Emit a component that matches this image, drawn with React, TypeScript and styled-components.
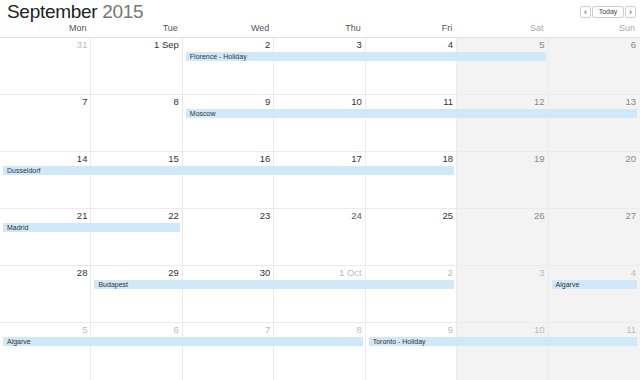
import styled, { createGlobalStyle } from "styled-components";

const GlobalStyle = createGlobalStyle`
  html, body {
    margin: 0;
    padding: 0;
    background: #fff;
    font-family: "Liberation Sans", Arial, sans-serif;
  }
`;

type Day = { label: string; muted?: boolean; today?: boolean };
type Evt = { title: string; start: number; end: number };
type Week = { days: Day[]; events: Evt[] };

const dayNames = ["Mon", "Tue", "Wed", "Thu", "Fri", "Sat", "Sun"];

const d = (label: string | number, muted = false, today = false): Day => ({
  label: String(label),
  muted,
  today,
});

const weeks: Week[] = [
  {
    days: [d(31, true), d("1 Sep"), d(2), d(3), d(4), d(5), d(6)],
    events: [{ title: "Florence - Holiday", start: 3, end: 6 }],
  },
  {
    days: [d(7), d(8), d(9), d(10), d(11), d(12), d(13)],
    events: [{ title: "Moscow", start: 3, end: 7 }],
  },
  {
    days: [d(14), d(15), d(16), d(17), d(18), d(19), d(20)],
    events: [{ title: "Dusseldorf", start: 1, end: 5 }],
  },
  {
    days: [d(21), d(22), d(23), d(24, false, true), d(25), d(26), d(27)],
    events: [{ title: "Madrid", start: 1, end: 2 }],
  },
  {
    days: [d(28), d(29), d(30), d("1 Oct", true), d(2, true), d(3, true), d(4, true)],
    events: [
      { title: "Budapest", start: 2, end: 5 },
      { title: "Algarve", start: 7, end: 7 },
    ],
  },
  {
    days: [d(5, true), d(6, true), d(7, true), d(8, true), d(9, true), d(10, true), d(11, true)],
    events: [
      { title: "Algarve", start: 1, end: 4 },
      { title: "Toronto - Holiday", start: 5, end: 7 },
    ],
  },
];

function App() {
  return (
    <>
      <GlobalStyle />
      <Calendar>
        <TopBar>
          <Title>
            <strong>September</strong> <span>2015</span>
          </Title>
          <Nav>
            <NavButton>‹</NavButton>
            <NavButton $wide>Today</NavButton>
            <NavButton>›</NavButton>
          </Nav>
        </TopBar>
        <DayNames>
          {dayNames.map((n, i) => (
            <DayName key={n} $weekend={i >= 5}>
              {n}
            </DayName>
          ))}
        </DayNames>
        <Weeks>
          {weeks.map((w, wi) => (
            <WeekRow key={wi}>
              {w.days.map((day, i) => (
                <Cell key={i} $col={i + 1} $weekend={i >= 5} $last={i === 6} />
              ))}
              {w.days.map((day, i) => (
                <DayNumber
                  key={"n" + i}
                  $col={i + 1}
                  $muted={day.muted}
                  $weekend={i >= 5}
                  $today={day.today}
                >
                  {day.label}
                </DayNumber>
              ))}
              {w.events.map((e) => (
                <EventBar key={e.title} $start={e.start} $end={e.end}>
                  {e.title}
                </EventBar>
              ))}
            </WeekRow>
          ))}
        </Weeks>
      </Calendar>
    </>
  );
}

export default App;

const Calendar = styled.div`
  width: 640px;
  height: 380px;
  display: flex;
  flex-direction: column;
  overflow: hidden;
`;

const TopBar = styled.div`
  height: 22px;
  display: flex;
  align-items: flex-start;
  justify-content: space-between;
  padding: 0 4px 0 7px;
`;

const Title = styled.div`
  font-size: 19px;
  line-height: 22px;
  margin-top: 1px;
  color: #222;
  letter-spacing: -0.3px;

  strong {
    font-weight: normal;
  }

  span {
    color: #777;
    font-weight: 300;
  }
`;

const Nav = styled.div`
  display: flex;
  margin-top: 6px;
  gap: 1px;
`;

const NavButton = styled.div<{ $wide?: boolean }>`
  height: 10px;
  width: ${(p) => (p.$wide ? "30px" : "9px")};
  border: 1px solid #cfcfcf;
  border-radius: 2px;
  font-size: ${(p) => (p.$wide ? "7px" : "9px")};
  line-height: 10px;
  text-align: center;
  color: #444;
  background: #fff;
`;

const DayNames = styled.div`
  height: 15px;
  display: grid;
  grid-template-columns: repeat(7, 1fr);
  border-bottom: 1px solid #dedede;
`;

const DayName = styled.div<{ $weekend?: boolean }>`
  font-size: 9px;
  line-height: 12px;
  text-align: right;
  padding-right: 5px;
  color: ${(p) => (p.$weekend ? "#aaa" : "#555")};
`;

const Weeks = styled.div`
  flex: 1;
  display: grid;
  grid-template-rows: repeat(6, 1fr);
`;

const WeekRow = styled.div`
  display: grid;
  grid-template-columns: repeat(7, 1fr);
  grid-template-rows: 14px 9px 1fr;
  border-bottom: 1px solid #ebebeb;

  &:last-child {
    border-bottom: none;
  }
`;

const Cell = styled.div<{ $col: number; $weekend?: boolean; $last?: boolean }>`
  grid-column: ${(p) => p.$col};
  grid-row: 1 / -1;
  background: ${(p) => (p.$weekend ? "#f3f3f3" : "#fff")};
  border-right: ${(p) => (p.$last ? "none" : "1px solid #ebebeb")};
`;

const DayNumber = styled.div<{
  $col: number;
  $muted?: boolean;
  $weekend?: boolean;
  $today?: boolean;
}>`
  grid-column: ${(p) => p.$col};
  grid-row: 1;
  font-size: 9.5px;
  line-height: 14px;
  text-align: right;
  padding: 0 4px 0 0;
  color: ${(p) =>
    p.$muted ? "#bbb" : p.$today ? "#4d5b70" : p.$weekend ? "#888" : "#333"};
`;

const EventBar = styled.div<{ $start: number; $end: number }>`
  grid-column: ${(p) => `${p.$start} / ${p.$end + 1}`};
  grid-row: 2;
  margin: 0 3px;
  background: #cfe9f9;
  color: #333;
  font-size: 7px;
  line-height: 9px;
  padding-left: 4px;
  white-space: nowrap;
  overflow: hidden;
`;
